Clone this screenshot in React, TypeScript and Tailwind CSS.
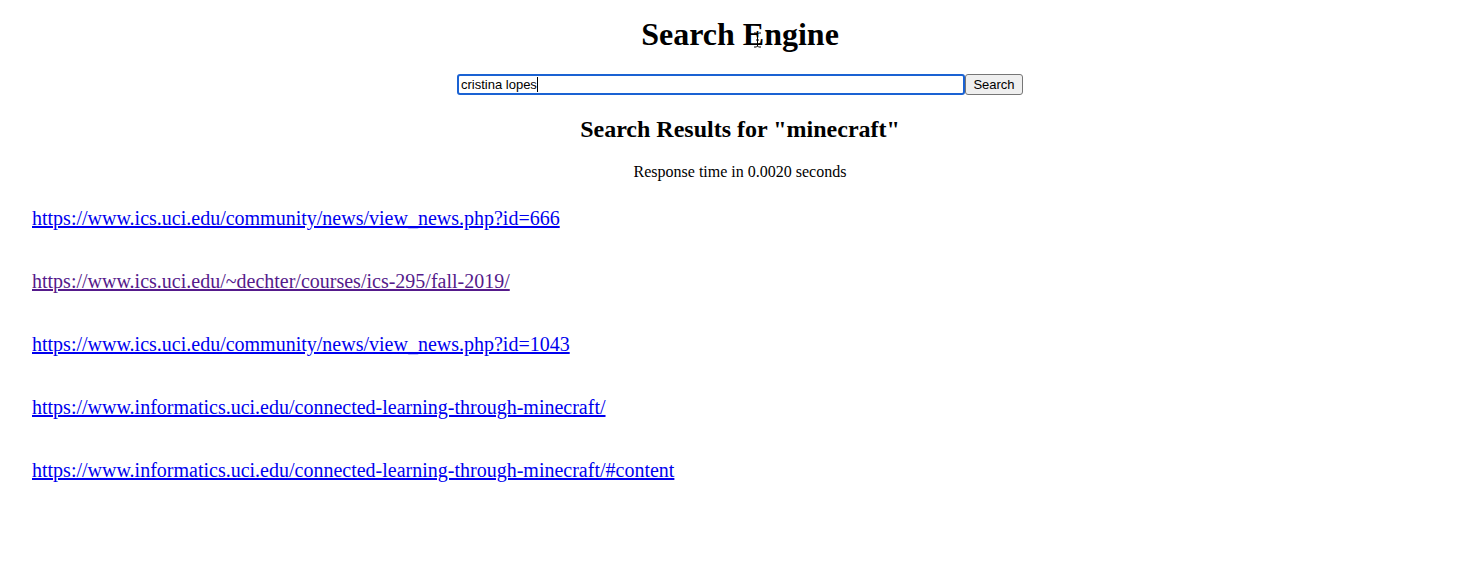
import React from "react";

const links = [
  { href: "https://www.ics.uci.edu/community/news/view_news.php?id=666", visited: false },
  { href: "https://www.ics.uci.edu/~dechter/courses/ics-295/fall-2019/", visited: true },
  { href: "https://www.ics.uci.edu/community/news/view_news.php?id=1043", visited: false },
  { href: "https://www.informatics.uci.edu/connected-learning-through-minecraft/", visited: false },
  { href: "https://www.informatics.uci.edu/connected-learning-through-minecraft/#content", visited: false },
];

export default function App() {
  return (
    <div className="w-[1476px] h-[586px] bg-white text-black font-['Liberation_Serif','Times_New_Roman',serif] relative">
      <div className="pl-[4px]">
        <h1 className="text-[32px] font-bold leading-[37px] text-center pt-[16px]">Search Engine</h1>
        <div className="flex justify-center mt-[21px]">
          <div className="flex items-start">
            <div className="relative w-[508px] h-[21px] border-2 border-[#1a62d3] rounded-[3px] bg-white flex items-center pl-[2px]">
              <span className="font-['Liberation_Sans',Arial,sans-serif] text-[13px] leading-[15px] text-black">cristina lopes</span>
              <span className="w-px h-[15px] bg-black"></span>
            </div>
            <button className="w-[58px] h-[21px] border border-[#767676] rounded-[3px] bg-[#efefef] font-['Liberation_Sans',Arial,sans-serif] text-[13px] leading-[15px] text-black">
              Search
            </button>
          </div>
        </div>
        <h2 className="text-[24px] font-bold leading-[28px] text-center mt-[20px]">Search Results for "minecraft"</h2>
        <p className="text-[16px] leading-[18px] text-center mt-[20px]">Response time in 0.0020 seconds</p>
      </div>
      <div className="pl-[32px] mt-[26px] flex flex-col gap-[40px]">
        {links.map((l) => (
          <a
            key={l.href}
            href={l.href}
            className={`text-[20px] leading-[23px] underline ${l.visited ? "text-[#551a8b]" : "text-[#0000ee]"}`}
          >
            {l.href}
          </a>
        ))}
      </div>
      <svg className="absolute left-[753px] top-[32px]" width="9" height="16" viewBox="0 0 9 16">
        <path d="M1 1h2.5L4.5 2 5.5 1H8M4.5 2v12M1 15h2.5l1-1 1 1H8M3 8h3" fill="none" stroke="#000" strokeWidth="1" />
      </svg>
    </div>
  );
}
